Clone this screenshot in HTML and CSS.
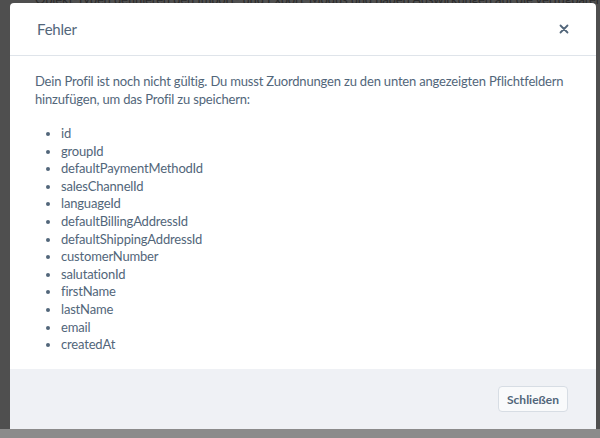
FILE: index.html
```html
<!DOCTYPE html>
<html lang="de">
<head>
<meta charset="utf-8">
<title>Fehler</title>
<link rel="stylesheet" href="styles.css">
</head>
<body>
<div class="backdrop">
  <p class="bg-text">Objekt-Typen definieren den Import- und Export-Modus und haben Auswirkungen auf die verfügbaren</p>
  <div class="modal">
    <div class="modal-header">
      <h2 class="modal-title">Fehler</h2>
      <button class="close" aria-label="Schließen">
        <svg width="10" height="10" viewBox="0 0 10 10"><path d="M1.5 1.5 L8.5 8.5 M8.5 1.5 L1.5 8.5" stroke="#52667a" stroke-width="1.8" stroke-linecap="round"/></svg>
      </button>
    </div>
    <div class="modal-body">
      <p class="intro">Dein Profil ist noch nicht gültig. Du musst Zuordnungen zu den unten angezeigten Pflichtfeldern hinzufügen, um das Profil zu speichern:</p>
      <ul class="fields">
        <li>id</li>
        <li>groupId</li>
        <li>defaultPaymentMethodId</li>
        <li>salesChannelId</li>
        <li>languageId</li>
        <li>defaultBillingAddressId</li>
        <li>defaultShippingAddressId</li>
        <li>customerNumber</li>
        <li>salutationId</li>
        <li>firstName</li>
        <li>lastName</li>
        <li>email</li>
        <li>createdAt</li>
      </ul>
    </div>
    <div class="modal-footer">
      <button class="btn">Schließen</button>
    </div>
  </div>
</div>
</body>
</html>
```
FILE: styles.css
```css
html, body {
  margin: 0;
  padding: 0;
}
body {
  width: 600px;
  height: 438px;
  overflow: hidden;
  background: #8b8b8b;
  font-family: "Lato", "Open Sans", sans-serif;
}
.backdrop {
  position: relative;
  height: 429px;
  background: #4f4f4f;
  overflow: hidden;
}
.bg-text {
  position: absolute;
  top: -9px;
  left: 35px;
  margin: 0;
  font-size: 13px;
  letter-spacing: -0.15px;
  color: #2b2b2b;
  white-space: nowrap;
}
.modal {
  position: absolute;
  top: 3px;
  left: 10px;
  width: 586px;
  height: 426px;
  background: #fff;
  border-radius: 4px 4px 0 0;
  display: flex;
  flex-direction: column;
  overflow: hidden;
}
.modal-header {
  height: 53px;
  border-bottom: 1px solid #dfe4ea;
  display: flex;
  align-items: center;
  justify-content: space-between;
  padding: 0 27px 0 27px;
  box-sizing: border-box;
  flex: none;
}
.modal-title {
  margin: 0;
  font-size: 15px;
  font-weight: 400;
  letter-spacing: -0.2px;
  color: #52667a;
}
.close {
  border: 0;
  background: none;
  padding: 0;
  width: 10px;
  height: 10px;
  display: flex;
}
.modal-body {
  flex: 1;
  padding: 16px 25px 0 25px;
  color: #52667a;
  font-size: 13px;
  letter-spacing: -0.18px;
}
.intro {
  margin: 0;
  line-height: 18px;
}
.fields {
  margin: 17px 0 0 0;
  padding-left: 26px;
  line-height: 17.6px;
}
.modal-footer {
  flex: none;
  height: 60px;
  background: #eff1f5;
  display: flex;
  align-items: center;
  justify-content: flex-end;
  padding: 0 28px 0 0;
  box-sizing: border-box;
}
.btn {
  height: 26px;
  width: 70px;
  padding: 0;
  border: 1px solid #d7dde4;
  border-radius: 4px;
  background: #f9fafb;
  font-family: "Lato", "Open Sans", sans-serif;
  font-size: 12px;
  font-weight: 700;
  color: #52667a;
}
```
